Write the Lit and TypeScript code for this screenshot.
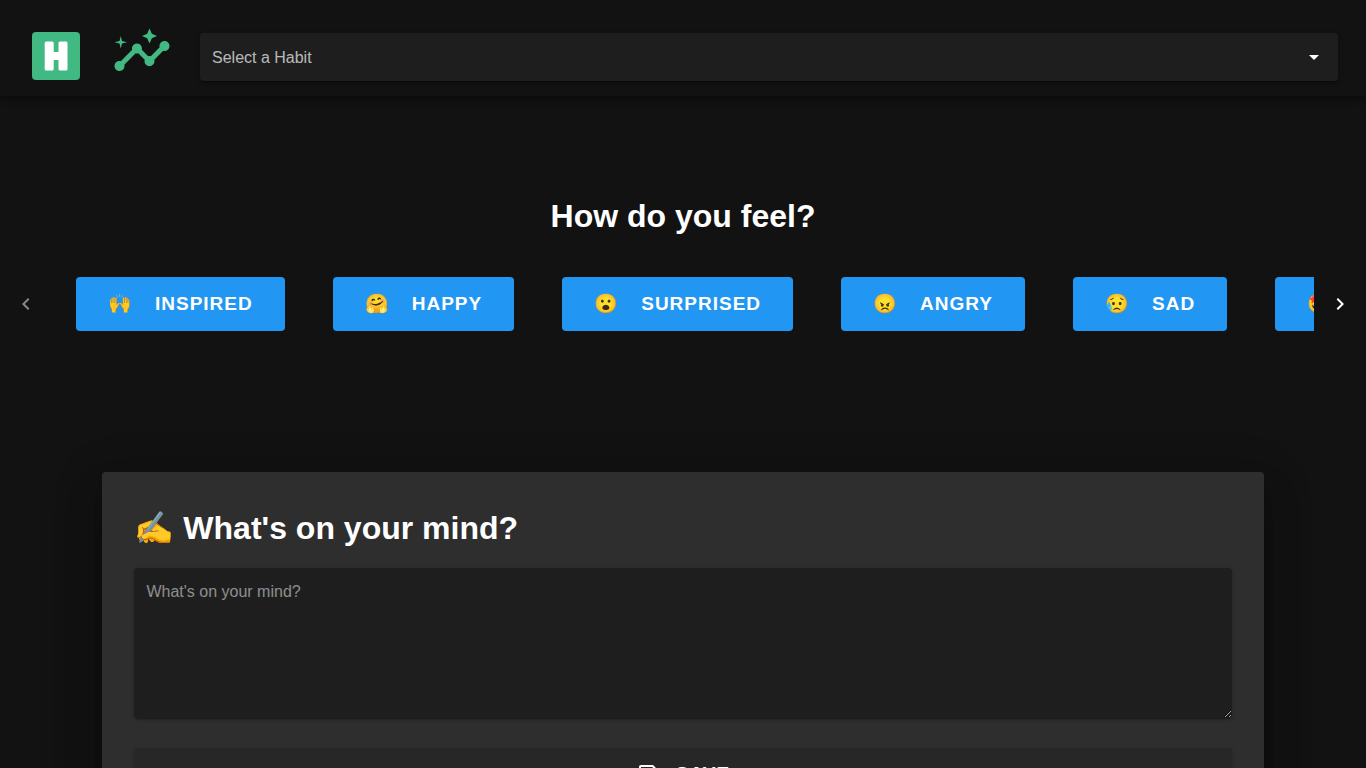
import { LitElement, html, css, svg } from "lit";
import { customElement } from "lit/decorators.js";

const moods = [
  { emoji: "🙌", label: "Inspired" },
  { emoji: "🤗", label: "Happy" },
  { emoji: "😮", label: "Surprised" },
  { emoji: "😠", label: "Angry" },
  { emoji: "😥", label: "Sad" },
  { emoji: "🤩", label: "Excited" },
];

const icon = (d: string, cls = "icon") => html`
  <svg class=${cls} viewBox="0 0 24 24" aria-hidden="true">${svg`<path d=${d}></path>`}</svg>
`;

const chevronLeft = "M15.41 16.58 10.83 12l4.58-4.59L14 6l-6 6 6 6z";
const chevronRight = "M8.59 16.58 13.17 12 8.59 7.41 10 6l6 6-6 6z";
const menuDown = "M7 10l5 5 5-5z";
const save =
  "M17 3H5C3.89 3 3 3.9 3 5V19C3 20.1 3.89 21 5 21H19C20.1 21 21 20.1 21 19V7L17 3M19 19H5V5H16.17L19 7.83V19M12 12C10.34 12 9 13.34 9 15S10.34 18 12 18 15 16.66 15 15 13.66 12 12 12M6 6H15V10H6V6Z";
const insights =
  "M21 8c-1.45 0-2.26 1.44-1.93 2.51l-3.55 3.56c-.3-.09-.74-.09-1.04 0l-2.55-2.55C12.27 10.45 11.46 9 10 9c-1.45 0-2.27 1.44-1.93 2.52l-4.56 4.55C2.44 15.74 1 16.55 1 18c0 1.1.9 2 2 2 1.45 0 2.26-1.44 1.93-2.51l4.55-4.56c.3.09.74.09 1.04 0l2.55 2.55C12.73 16.55 13.54 18 15 18c1.45 0 2.27-1.44 1.93-2.52l3.56-3.55C21.56 12.26 23 11.45 23 10c0-1.1-.9-2-2-2zM15 9l.94-2.07L18 6l-2.06-.93L15 3l-.92 2.07L12 6l2.08.93zM3.5 11 4 9l2-.5L4 8l-.5-2L3 8l-2 .5L3 9z";

@customElement("app-root")
export class AppRoot extends LitElement {
  static styles = css`
    :host {
      display: block;
      height: 100vh;
      overflow: hidden;
      background: #121212;
      color: #fff;
      font-family: "Liberation Sans", Arial, sans-serif;
      font-size: 16px;
      line-height: 24px;
    }
    * {
      box-sizing: border-box;
    }
    h1,
    h2 {
      margin: 0;
      font-size: 32px;
      line-height: 48px;
      font-weight: 700;
    }
    button,
    select,
    textarea {
      font: inherit;
      color: inherit;
      border: 0;
      margin: 0;
    }
    button {
      cursor: pointer;
    }
    .icon {
      width: 24px;
      height: 24px;
      fill: currentColor;
      flex: none;
    }
    .bar {
      display: flex;
      align-items: center;
      height: 96px;
      padding: 16px 28px 0 32px;
      box-shadow:
        0 2px 4px -1px rgba(0, 0, 0, 0.2),
        0 4px 5px 0 rgba(0, 0, 0, 0.14),
        0 1px 10px 0 rgba(0, 0, 0, 0.12);
    }
    .home,
    .stats {
      display: flex;
      color: #42b883;
    }
    .stats {
      margin: 0 28px 10px 32px;
    }
    .logo {
      width: 48px;
      height: 48px;
    }
    .insights {
      width: 60px;
      height: 60px;
      fill: currentColor;
    }
    .habit {
      display: grid;
      flex: 1;
      align-items: center;
      margin-top: 2px;
      background: #1e1e1e;
      border-radius: 4px;
    }
    .habit,
    .note {
      box-shadow:
        0 3px 1px -2px rgba(0, 0, 0, 0.2),
        0 2px 2px 0 rgba(0, 0, 0, 0.14),
        0 1px 5px 0 rgba(0, 0, 0, 0.12);
    }
    .habit select,
    .habit .icon {
      grid-area: 1 / 1;
    }
    .habit select {
      appearance: none;
      width: 100%;
      height: 48px;
      padding: 2px 48px 0 12px;
      background: transparent;
      border-radius: 4px;
      color: rgba(255, 255, 255, 0.7);
    }
    .habit .icon {
      justify-self: end;
      margin-right: 12px;
      pointer-events: none;
    }
    .feel {
      padding-top: 96px;
    }
    .feel h1 {
      text-align: center;
    }
    .slider {
      display: flex;
      margin-top: 37px;
    }
    .arrow {
      display: flex;
      flex: none;
      align-items: center;
      justify-content: center;
      width: 52px;
      padding: 0;
      background: none;
    }
    .arrow:disabled {
      color: rgba(255, 255, 255, 0.5);
    }
    .moods {
      display: flex;
      flex: 1;
      min-width: 0;
      gap: 48px;
      padding: 0 24px;
      overflow: hidden;
    }
    .mood,
    .save {
      display: flex;
      flex: none;
      align-items: center;
      height: 54px;
      padding: 0 32px;
      border-radius: 4px;
      font-size: 19px;
      font-weight: 700;
      letter-spacing: 1px;
      text-transform: uppercase;
      white-space: nowrap;
    }
    .mood {
      gap: 22px;
      background: #2196f3;
    }
    .card {
      width: 85%;
      margin: 141px auto 0;
      padding: 32px;
      border-radius: 4px;
      background: #2e2e2e;
      box-shadow:
        0 11px 15px -7px rgba(0, 0, 0, 0.2),
        0 24px 38px 3px rgba(0, 0, 0, 0.14),
        0 9px 46px 8px rgba(0, 0, 0, 0.12);
    }
    .note {
      display: block;
      width: 100%;
      height: 150px;
      margin-top: 16px;
      padding: 12px;
      border-radius: 4px;
      background: #1e1e1e;
      resize: vertical;
    }
    .note::placeholder {
      color: rgba(255, 255, 255, 0.5);
    }
    .save {
      justify-content: center;
      gap: 16px;
      width: 100%;
      height: 52px;
      margin-top: 30px;
      background: #272727;
      box-shadow:
        0 3px 1px -2px rgba(0, 0, 0, 0.2),
        0 2px 2px 0 rgba(0, 0, 0, 0.14),
        0 1px 5px 0 rgba(0, 0, 0, 0.12);
    }
  `;

  render() {
    return html`
      <header class="bar">
        <a class="home" href="#" aria-label="Home">
          <svg class="logo" viewBox="0 0 48 48" aria-hidden="true">
            <rect width="48" height="48" rx="4" fill="#42b883"></rect>
            <rect x="12.700" y="9.500" width="9" height="29" rx="1.500" fill="#fff"></rect>
            <rect x="26.500" y="9.500" width="9" height="29" rx="1.500" fill="#fff"></rect>
            <rect x="20" y="20" width="8" height="8" fill="#fff"></rect>
          </svg>
        </a>
        <a class="stats" href="#insights" aria-label="Insights">${icon(insights, "insights")}</a>
        <div class="habit">
          <select aria-label="Select a Habit">
            <option>Select a Habit</option>
          </select>
          ${icon(menuDown)}
        </div>
      </header>
      <main>
        <section class="feel">
          <h1>How do you feel?</h1>
          <div class="slider">
            <button class="arrow" disabled aria-label="Previous">${icon(chevronLeft)}</button>
            <div class="moods">
              ${moods.map(
                (m) => html`<button class="mood"><span>${m.emoji}</span><span>${m.label}</span></button>`
              )}
            </div>
            <button class="arrow" aria-label="Next">${icon(chevronRight)}</button>
          </div>
        </section>
        <section class="card">
          <h2><label for="note">✍️ What's on your mind?</label></h2>
          <textarea class="note" id="note" placeholder="What's on your mind?"></textarea>
          <button class="save">${icon(save)}<span>Save</span></button>
        </section>
      </main>
    `;
  }
}
